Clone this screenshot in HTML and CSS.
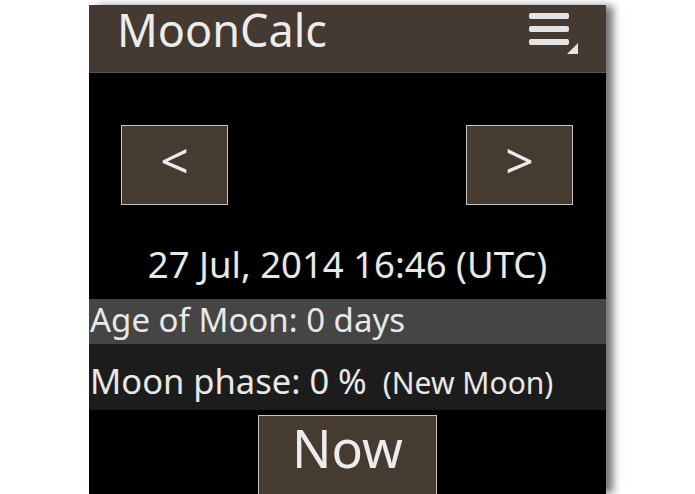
FILE: index.html
```html
<!DOCTYPE html>
<html lang="en">
<head>
<meta charset="utf-8">
<title>MoonCalc</title>
<link rel="stylesheet" href="styles.css">
</head>
<body>
<div class="phone">
  <header class="appbar">
    <h1 class="title">MoonCalc</h1>
    <svg class="menu" width="49" height="41" viewBox="0 0 49 41" aria-label="menu">
      <rect x="0" y="0" width="40" height="6" rx="2" fill="#e4e4e4"/>
      <rect x="0" y="13" width="40" height="6" rx="2" fill="#e4e4e4"/>
      <rect x="0" y="26" width="40" height="6" rx="2" fill="#e4e4e4"/>
      <polygon points="49,30 49,41 38,41" fill="#e4e4e4"/>
    </svg>
  </header>
  <main class="content">
    <div class="nav">
      <button class="btn step">&lt;</button>
      <button class="btn step">&gt;</button>
    </div>
    <p class="date">27 Jul, 2014 16:46 (UTC)</p>
    <div class="row age">Age of Moon: 0 days</div>
    <div class="row phase">Moon phase: 0 % <span class="note">(New Moon)</span></div>
    <div class="now-wrap">
      <button class="btn now">Now</button>
    </div>
  </main>
</div>
</body>
</html>
```

FILE: styles.css
```css
html, body {
  margin: 0;
  padding: 0;
  background: #ffffff;
  overflow: hidden;
}

body {
  font-family: "Noto Sans", "Open Sans", "DejaVu Sans", sans-serif;
  height: 494px;
}

.phone {
  margin: 5px 0 0 89px;
  width: 517px;
  height: 489px;
  background: #000000;
  box-shadow: 8px 0 8px -1px rgba(0, 0, 0, 0.55);
  display: flex;
  flex-direction: column;
}

.appbar {
  flex: none;
  height: 67px;
  background: #443a31;
  border-bottom: 1px solid #5e5344;
  display: flex;
  align-items: flex-start;
  padding-left: 28px;
}

.title {
  margin: 0;
  padding-top: 2px;
  font-size: 45px;
  line-height: 45px;
  font-weight: normal;
  color: #ececec;
}

.menu {
  display: block;
  margin: 8px 28px 0 auto;
}

.content {
  display: flex;
  flex-direction: column;
  color: #e8e8e8;
}

.nav {
  display: flex;
  justify-content: space-between;
  padding: 0 33px 0 32px;
  margin-top: 52px;
}

.btn {
  font-family: inherit;
  color: #ececec;
  background: #453b31;
  border: 1.5px solid #c9c5bd;
  padding: 0;
  margin: 0;
}

.step {
  width: 107px;
  height: 80px;
  font-size: 50px;
  line-height: 50px;
  padding-bottom: 10px;
}

.date {
  margin: 37px 0 13px;
  text-align: center;
  font-size: 36.5px;
  line-height: 44px;
}

.row {
  padding-left: 1px;
  line-height: 42px;
  white-space: nowrap;
}

.age {
  height: 45px;
  font-size: 33px;
  background: #454545;
}

.phase {
  height: 50px;
  padding-top: 16px;
  font-size: 34.5px;
  background: #1c1c1c;
}

.note {
  font-size: 30px;
  margin-left: 7px;
}

.now-wrap {
  display: flex;
  justify-content: center;
  margin-top: 5px;
}

.now {
  width: 179px;
  height: 79px;
  border-bottom: none;
  font-size: 52px;
  line-height: 60px;
  padding-top: 2px;
  display: flex;
  justify-content: center;
  align-items: flex-start;
}
```
